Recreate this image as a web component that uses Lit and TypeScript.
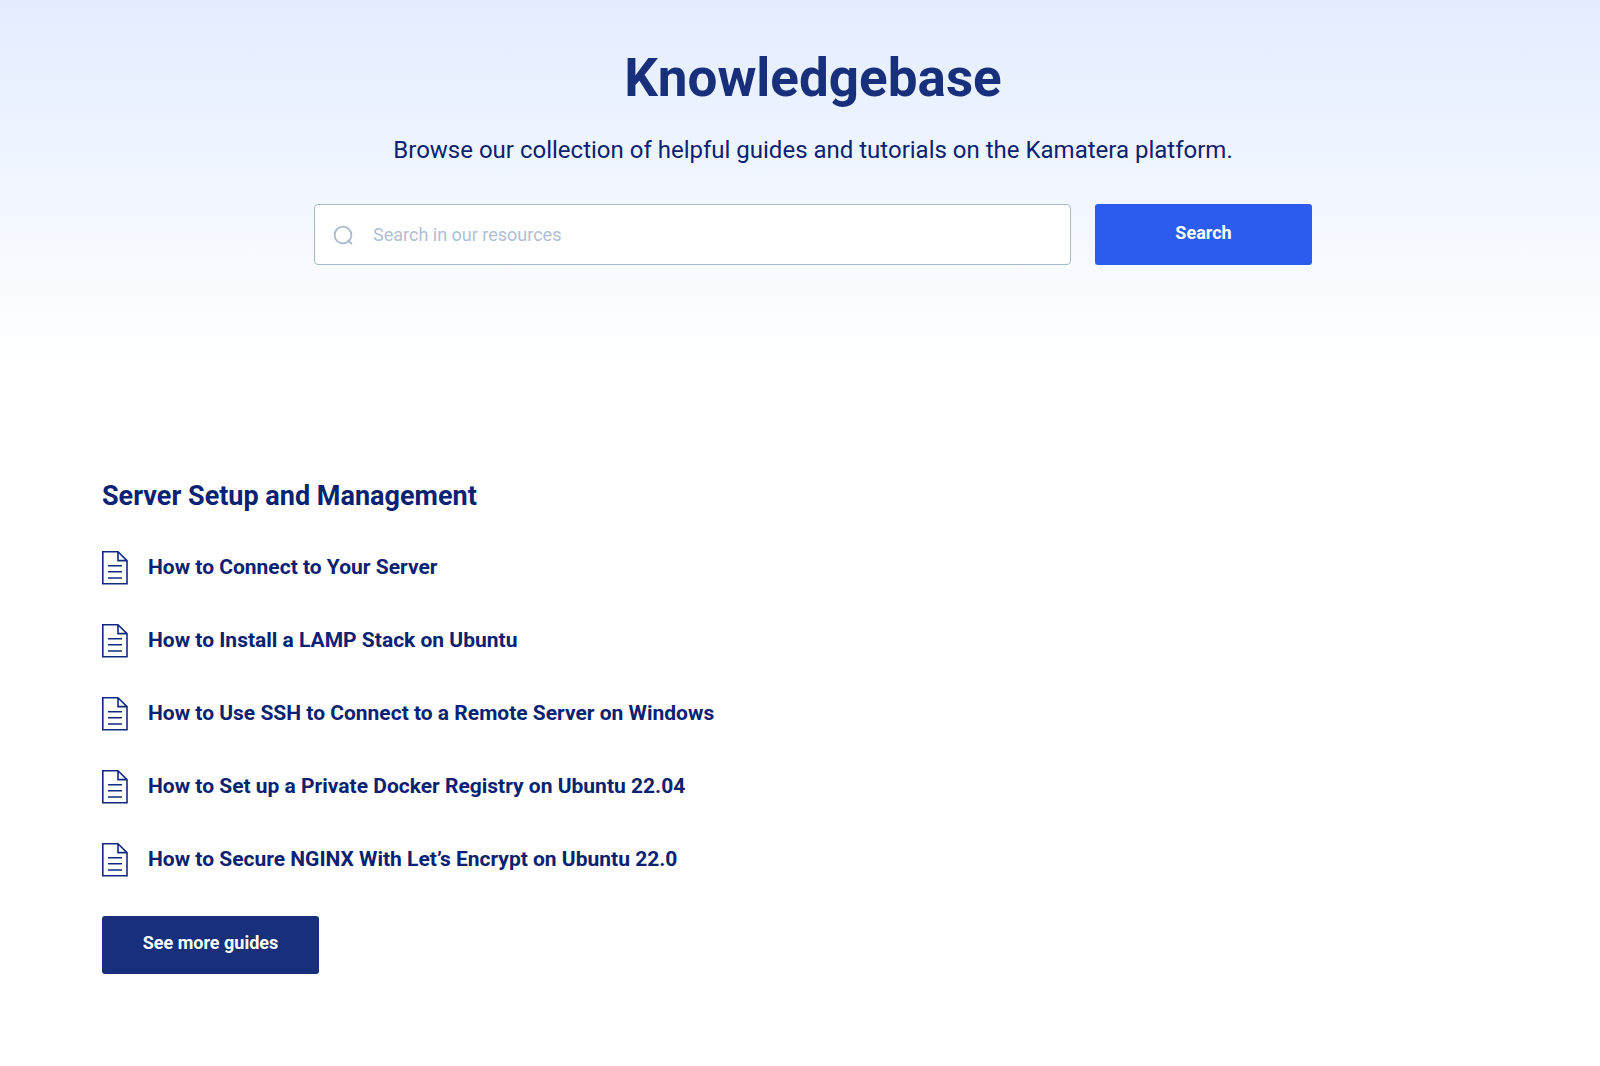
import { LitElement, html, css } from "lit";
import { customElement, state } from "lit/decorators.js";

const GUIDES = [
  "How to Connect to Your Server",
  "How to Install a LAMP Stack on Ubuntu",
  "How to Use SSH to Connect to a Remote Server on Windows",
  "How to Set up a Private Docker Registry on Ubuntu 22.04",
  "How to Secure NGINX With Let’s Encrypt on Ubuntu 22.0",
];

@customElement("app-root")
export class AppRoot extends LitElement {
  static styles = css`
    :host {
      display: block;
      min-height: 100vh;
      background: #fff;
      color: #0a2272;
      font-family: Roboto, "Liberation Sans", sans-serif;
    }
    * { box-sizing: border-box; margin: 0; }
    .hero {
      display: flex;
      flex-direction: column;
      align-items: center;
      padding: 46px 24px 104px 50px;
      background: linear-gradient(#e3edff, #fff);
    }
    h1 { font-size: 53px; line-height: 64px; font-weight: 700; color: #18307b; }
    .lead { margin-top: 24px; font-size: 24px; line-height: 32px; text-align: center; }
    .search { display: flex; gap: 24px; width: 100%; max-width: 998px; margin-top: 38px; }
    .field {
      display: flex;
      flex: 1;
      align-items: center;
      gap: 20px;
      height: 61px;
      padding: 0 18px;
      border: 1px solid #a9bad0;
      border-radius: 4px;
      background: #fff;
    }
    .field svg { flex: none; width: 20px; height: 20px; }
    input { flex: 1; min-width: 0; padding: 0; border: 0; outline: 0; background: none; color: #0a2272; font: 18px/24px Roboto, "Liberation Sans", sans-serif; }
    input::placeholder { color: #afbfd5; opacity: 1; }
    button { border: 0; border-radius: 3px; width: 217px; color: #fff; font: 700 18px/24px Roboto, "Liberation Sans", sans-serif; cursor: pointer; padding: 0 0 4px; }
    .go { background: #2b5cee; }
    .guides { padding: 111px 102px 92px; }
    h2 { font-size: 27px; line-height: 32px; font-weight: 700; }
    ul { display: flex; flex-direction: column; gap: 39px; margin: 39px 0; padding: 0; list-style: none; }
    li { display: flex; }
    a { display: flex; gap: 20px; color: inherit; text-decoration: none; font-size: 21px; line-height: 32px; font-weight: 700; }
    a svg { flex: none; width: 26px; height: 34px; }
    .more { height: 58px; background: #18307b; }
  `;

  @state() private query = "";

  render() {
    return html`
      <header class="hero">
        <h1>Knowledgebase</h1>
        <p class="lead">Browse our collection of helpful guides and tutorials on the Kamatera platform.</p>
        <form class="search" role="search" @submit=${(e: Event) => e.preventDefault()}>
          <label class="field">
            <svg viewBox="0 0 20 20" fill="none" stroke="#a9bad0" stroke-width="1.8" aria-hidden="true">
              <circle cx="10" cy="10" r="8.4" /><path d="M14.8 15 18.8 19" />
            </svg>
            <input type="search" aria-label="Search in our resources" placeholder="Search in our resources"
              .value=${this.query} @input=${(e: Event) => (this.query = (e.target as HTMLInputElement).value)} />
          </label>
          <button class="go" type="submit">Search</button>
        </form>
      </header>
      <main class="guides">
        <h2>Server Setup and Management</h2>
        <ul>
          ${GUIDES.map((title) => html`
            <li><a href="#">
              <svg viewBox="0 0 26 34" fill="none" stroke="#102a80" stroke-width="1.6" aria-hidden="true">
                <path d="M.8 .8H16L25 9.6V32.8H.8ZM16 .8V9.6H25M6 14.8H20M6 20.8H20M6 27H20" />
              </svg>
              <span>${title}</span>
            </a></li>`)}
        </ul>
        <button class="more" type="button">See more guides</button>
      </main>
    `;
  }
}
